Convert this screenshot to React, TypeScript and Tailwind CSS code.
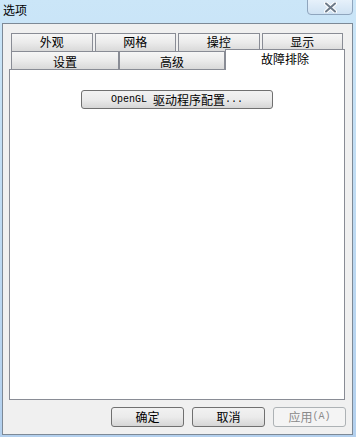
import React from 'react';

const CJK = "font-['Noto_Sans_CJK_SC',sans-serif]";

const BACK_TABS = ['外观', '网格', '操控', '显示'];

function Tab({ label, className = '' }: { label: string; className?: string }) {
  return (
    <div
      className={`flex items-center justify-center border border-b-0 border-[#898c95] bg-linear-to-b from-[#f6f6f6] via-[#ebebeb] to-[#d9d9d9] text-[12px] leading-[12px] text-black ${className}`}
    >
      {label}
    </div>
  );
}

function DlgButton({
  children,
  disabled = false,
}: {
  children: React.ReactNode;
  disabled?: boolean;
}) {
  return (
    <div
      className={`flex h-[20px] w-[73px] items-center justify-center rounded-[3px] border text-[12px] leading-[12px] ${
        disabled
          ? 'border-[#adb2b5] bg-[#f4f4f4] text-[#8a8a8a]'
          : 'border-[#707070] bg-linear-to-b from-[#f2f2f2] via-[#ebebeb] to-[#d6d6d6] text-black'
      }`}
    >
      {children}
    </div>
  );
}

export default function App() {
  return (
    <div
      className={`relative flex h-[437px] w-[356px] flex-col overflow-hidden bg-linear-to-b from-[#cbe6f8] to-[#b3d0ee] ${CJK}`}
    >
      {/* Title bar */}
      <div className="flex h-[23px] shrink-0 items-start">
        <span className="pl-[3px] pt-[3px] text-[12px] leading-[13px] text-black">选项</span>
        {/* Close button */}
        <div className="absolute right-[3px] top-[-2px] flex h-[17px] w-[46px] items-center justify-center rounded-b-[4px] border border-[#8fa5bd] bg-linear-to-b from-[#e8f2fb] to-[#cfe2f3]">
          <svg width="13" height="11" viewBox="0 0 13 11" className="mt-[2px]">
            <path
              d="M2 1.5 L11 9.5 M11 1.5 L2 9.5"
              stroke="#ffffff"
              strokeWidth="4"
              strokeLinecap="round"
            />
            <path
              d="M2 1.5 L11 9.5 M11 1.5 L2 9.5"
              stroke="#6e7b8a"
              strokeWidth="2"
              strokeLinecap="round"
            />
          </svg>
        </div>
      </div>

      {/* Client area */}
      <div className="ml-[2px] flex h-[412px] w-[351px] flex-col border border-[#7d8996] bg-[#f0f0f0]">
        {/* Tab control */}
        <div className="ml-[6px] mt-[9px] flex w-[336px] flex-col">
          {/* Back row */}
          <div className="flex h-[18px] gap-[2px] px-[2px]">
            {BACK_TABS.map((t) => (
              <Tab key={t} label={t} className="flex-1 pb-[1px]" />
            ))}
          </div>
          {/* Front row */}
          <div className="flex h-[18px] items-end pl-[2px]">
            <Tab label="设置" className="h-[18px] w-[108px] pt-[2px]" />
            <Tab label="高级" className="h-[18px] w-[106px] pt-[2px]" />
            <div className="relative z-10 -mb-px flex h-[21px] w-[120px] justify-center border border-b-0 border-[#898c95] bg-white pt-[3px] text-[12px] leading-[12px] text-black">
              故障排除
            </div>
          </div>
          {/* Page */}
          <div className="flex h-[331px] flex-col items-center border border-[#898c95] bg-white">
            <div className="mt-[20px] flex h-[19px] w-[192px] items-center justify-center rounded-[3px] border border-[#707070] bg-linear-to-b from-[#f2f2f2] via-[#ebebeb] to-[#d6d6d6] text-[12px] leading-[12px] text-black">
              <span className="font-['Liberation_Mono',monospace] text-[10px] font-normal">OpenGL&nbsp;</span>
              <span>驱动程序配置</span>
              <span className="font-['Liberation_Mono',monospace] text-[10px] font-normal">...</span>
            </div>
          </div>
        </div>

        {/* Dialog buttons */}
        <div className="mt-[7px] flex justify-end gap-[8px] pr-[6px]">
          <DlgButton>确定</DlgButton>
          <DlgButton>取消</DlgButton>
          <DlgButton disabled>
            <span>应用</span>
            <span className="font-['Liberation_Mono',monospace] text-[10px]">(A)</span>
          </DlgButton>
        </div>
      </div>
    </div>
  );
}
